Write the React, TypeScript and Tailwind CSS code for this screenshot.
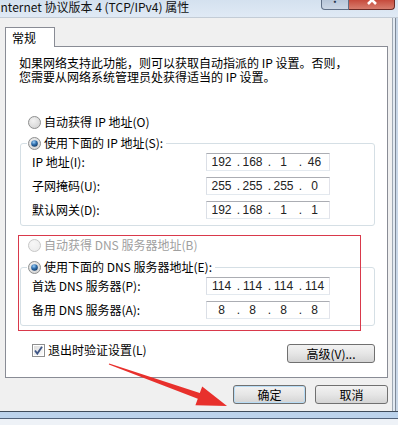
import { useId } from "react";

const Radio = ({ checked, disabled }: { checked?: boolean; disabled?: boolean }) => {
  const id = useId().replace(/:/g, "");
  return (
    <svg width="13" height="13" viewBox="0 0 13 13" className="shrink-0">
      <defs>
        <radialGradient id={`o${id}`} cx="0.4" cy="0.35" r="0.7">
          <stop offset="0" stopColor={disabled ? "#f7f7f7" : "#f2f2f2"} />
          <stop offset="1" stopColor={disabled ? "#ececec" : "#d4d4d4"} />
        </radialGradient>
        <radialGradient id={`d${id}`} cx="0.4" cy="0.3" r="0.75">
          <stop offset="0" stopColor="#9fd0f7" />
          <stop offset="0.5" stopColor="#2f6fae" />
          <stop offset="1" stopColor="#13365e" />
        </radialGradient>
      </defs>
      <circle cx="6.5" cy="6.5" r="6" fill={`url(#o${id})`} stroke={disabled ? "#c7c7c7" : "#8e8f8f"} />
      {checked && <circle cx="6.5" cy="6.5" r="3.3" fill={`url(#d${id})`} />}
    </svg>
  );
};

const Check = () => (
  <svg width="13" height="13" viewBox="0 0 13 13" className="shrink-0">
    <defs>
      <linearGradient id="cbg" x1="0" y1="0" x2="1" y2="1">
        <stop offset="0" stopColor="#dcdcdc" />
        <stop offset="1" stopColor="#fbfbfb" />
      </linearGradient>
    </defs>
    <rect x="0.5" y="0.5" width="12" height="12" fill="#fff" stroke="#8e8f8f" />
    <rect x="2" y="2" width="9" height="9" fill="url(#cbg)" />
    <path d="M3 6.5 L5.3 9.6 L10 2.8" fill="none" stroke="#3f5686" strokeWidth="1.8" />
  </svg>
);

const IpBox = ({ parts }: { parts: string[] }) => (
  <div className="flex items-center w-[124px] h-[18px] bg-white border border-t-[#abadb3] border-l-[#dbdfe6] border-r-[#e2e3ea] border-b-[#e3e9ef] pl-[2px] font-['Liberation_Sans',sans-serif] text-[12px] leading-[16px] text-[#222]">
    {parts.map((p, i) => (
      <div key={i} className="flex">
        {i > 0 && <span className="w-[6px] text-right">.</span>}
        <span className="w-[25px] text-center">{p}</span>
      </div>
    ))}
  </div>
);

const Row = ({ label, parts }: { label: string; parts: string[] }) => (
  <div className="flex items-center h-[18px] pl-[11px]">
    <span className="w-[174px] leading-[14px]">{label}</span>
    <IpBox parts={parts} />
  </div>
);

const Group = ({ legend, rows }: { legend: string; rows: { label: string; parts: string[] }[] }) => (
  <div className="ml-[14px] w-[355px] border border-[#d5dfe5] rounded-[3px] flex flex-col pb-[6px]">
    <div className="-mt-[8px] ml-[6px] self-start flex items-center gap-[3px] bg-white px-[1px] pr-[3px] h-[14px] leading-[14px]">
      <Radio checked />
      <span>{legend}</span>
    </div>
    <div className="mt-[3px] flex flex-col gap-[6px]">
      {rows.map((r) => (
        <Row key={r.label} label={r.label} parts={r.parts} />
      ))}
    </div>
  </div>
);

const btn =
  "h-[19px] rounded-[3px] border border-[#707070] bg-linear-to-b from-[#f2f2f2] via-[#e6e6e6] to-[#d4d4d4] flex items-center justify-center leading-[14px] text-[12px]";

export default function App() {
  return (
    <div className="relative w-[398px] h-[425px] overflow-hidden bg-[#f0f0f0] flex flex-col text-[12px] text-black font-['Noto_Sans_CJK_SC',sans-serif]">
      {/* title bar */}
      <div className="h-[18px] shrink-0 flex items-start justify-between bg-linear-to-b from-[#d4e1ef] to-[#e0eaf5] border-b border-[#c3ccd6]">
        <div className="-ml-[3px] leading-[14px] text-[12px] text-[#111]">Internet 协议版本 4 (TCP/IPv4) 属性</div>
        <div className="flex mr-[3px]">
          <div className="w-[28px] h-[10px] overflow-hidden rounded-bl-[4px] border border-t-0 border-[#5f6f86] bg-linear-to-b from-[#b7c6d9] to-[#cdd8e6] flex justify-center">
            <span className="-mt-[9px] text-[12px] leading-[14px] text-[#27364a] font-bold">?</span>
          </div>
          <div className="w-[46px] h-[10px] overflow-hidden rounded-br-[4px] border border-t-0 border-l-0 border-[#6b2a25] bg-linear-to-b from-[#c64a3c] to-[#d77d6e] flex justify-center">
            <svg width="12" height="12" viewBox="0 0 12 12" className="-mt-[6px]">
              <path d="M2 2 L10 10 M10 2 L2 10" stroke="#fff" strokeWidth="2.6" />
            </svg>
          </div>
        </div>
      </div>

      {/* body */}
      <div className="flex flex-1">
        <div className="w-[392px] flex flex-col">
          <div className="pt-[9px] pl-[5px] flex">
            <div className="relative z-10 w-[50px] h-[20px] -mb-[1px] bg-white border border-b-0 border-[#898c95] pl-[6px] pt-[2px] leading-[16px]">
              常规
            </div>
          </div>
          <div className="ml-[5px] w-[383px] h-[332px] bg-white border border-[#898c95] flex flex-col pt-[9px]">
            <div className="pl-[13px] flex flex-col">
              <span className="h-[14px] leading-[14px]">如果网络支持此功能，则可以获取自动指派的 IP 设置。否则，</span>
              <span className="h-[14px] leading-[14px]">您需要从网络系统管理员处获得适当的 IP 设置。</span>
            </div>
            <div className="mt-[31px] ml-[22px] flex items-center gap-[3px] h-[14px] leading-[14px]">
              <Radio />
              <span>自动获得 IP 地址(O)</span>
            </div>
            <div className="mt-[14px]">
              <Group
                legend="使用下面的 IP 地址(S):"
                rows={[
                  { label: "IP 地址(I):", parts: ["192", "168", "1", "46"] },
                  { label: "子网掩码(U):", parts: ["255", "255", "255", "0"] },
                  { label: "默认网关(D):", parts: ["192", "168", "1", "1"] },
                ]}
              />
            </div>
            <div className="mt-[12px] ml-[22px] flex items-center gap-[3px] h-[14px] leading-[14px] text-[#a0a0a0]">
              <Radio disabled />
              <span>自动获得 DNS 服务器地址(B)</span>
            </div>
            <div className="mt-[15px]">
              <Group
                legend="使用下面的 DNS 服务器地址(E):"
                rows={[
                  { label: "首选 DNS 服务器(P):", parts: ["114", "114", "114", "114"] },
                  { label: "备用 DNS 服务器(A):", parts: ["8", "8", "8", "8"] },
                ]}
              />
            </div>
            <div className="mt-[17px] flex items-start justify-between pl-[26px] pr-[12px]">
              <div className="flex items-center gap-[3px] h-[14px] leading-[14px]">
                <Check />
                <span>退出时验证设置(L)</span>
              </div>
              <div className={`${btn} mt-[1px] w-[88px] h-[18px]`}>高级(V)...</div>
            </div>
          </div>
          <div className="mt-[7px] pr-[4px] flex justify-end gap-[9px]">
            <div className={`${btn} w-[73px] border-[#3c7fb1] shadow-[inset_0_0_0_1px_#b8dcf5]`}>确定</div>
            <div className={`${btn} w-[73px]`}>取消</div>
          </div>
        </div>
        <div className="w-[6px] flex border-l border-[#9ea8b3]">
          <div className="w-[2px] bg-[#e3eaf2]" />
          <div className="w-[1px] bg-[#7d8896]" />
          <div className="flex-1 bg-[#c9d7e7]" />
        </div>
      </div>

      {/* bottom frame */}
      <div className="h-[14px] shrink-0 flex flex-col border-t border-[#3f4c5b]">
        <div className="h-[6px] bg-[#bcd3ec]" />
        <div className="h-[1px] bg-[#51627a]" />
        <div className="flex-1 bg-[#eef2f7]" />
      </div>

      {/* red annotation box */}
      <div className="absolute left-[18px] top-[235px] w-[343px] h-[96px] border-[1.5px] border-[#d9394b] pointer-events-none" />

      {/* red annotation arrow */}
      <svg className="absolute left-0 top-0 pointer-events-none" width="398" height="425" viewBox="0 0 398 425">
        <polygon
          points="109.2,363.4 199.8,393.1 202.2,386.5 227,406 195.4,405.3 197.8,398.7 108.8,364.6"
          fill="#e8302c"
        />
      </svg>
    </div>
  );
}
